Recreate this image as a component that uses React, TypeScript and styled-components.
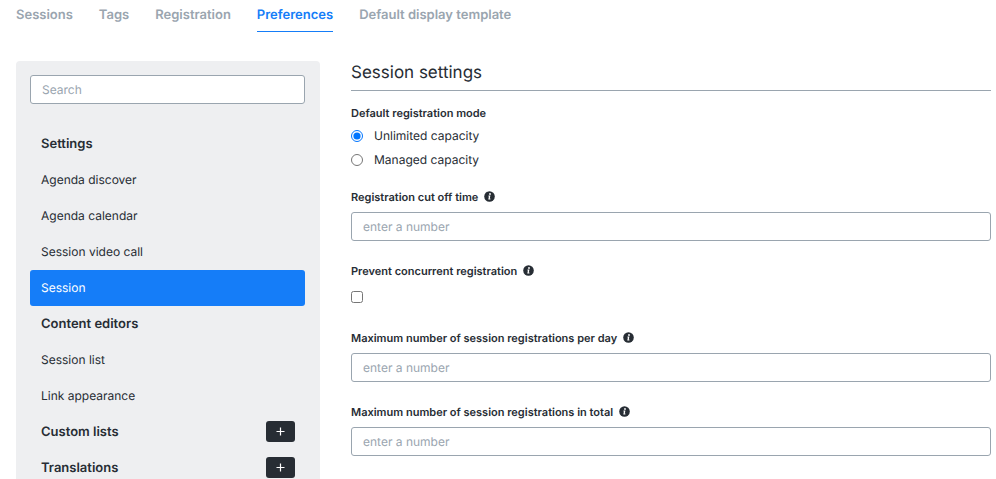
import React from "react";
import styled, { createGlobalStyle } from "styled-components";

const ink = "#272d34";
const muted = "#9aa5af";
const blue = "#157df8";

const GlobalStyle = createGlobalStyle`
  *, *::before, *::after { box-sizing: border-box; }
  body {
    margin: 0;
    background: #fff;
    color: ${ink};
    font-family: Inter, "Liberation Sans", sans-serif;
    font-size: 12px;
    line-height: 20px;
    text-rendering: geometricPrecision;
  }
  button, input { font: inherit; text-rendering: inherit; }
`;

const Page = styled.div`
  height: 100vh;
  overflow: hidden;
  padding: 0 5px 0 16px;
`;

const Tabs = styled.nav`
  display: flex;
  gap: 26px;
  padding-top: 5px;
`;

const Tab = styled.a<{ $active?: boolean }>`
  height: 27px;
  font-size: 13px;
  font-weight: 600;
  text-decoration: none;
  white-space: nowrap;
  color: ${(p) => (p.$active ? blue : muted)};
  border-bottom: 1px solid ${(p) => (p.$active ? blue : "transparent")};
`;

const Columns = styled.div`
  display: flex;
  align-items: flex-start;
  gap: 31px;
  margin-top: 29px;
`;

const Sidebar = styled.aside`
  flex: 0 0 304px;
  padding: 14px 15px 14px 14px;
  background: #eeeff1;
  border-radius: 4px;
`;

const TextInput = styled.input`
  display: block;
  width: 100%;
  height: 29px;
  padding: 0 11px;
  color: ${ink};
  background: #fff;
  border: 1px solid ${muted};
  border-radius: 3px;
  outline: none;
  &::placeholder { color: ${muted}; opacity: 1; }
  &:focus { border-color: ${blue}; }
`;

const Menu = styled.ul`
  margin: 22px 0 0;
  padding: 0;
  list-style: none;
`;

const MenuHeading = styled.li`
  display: flex;
  align-items: center;
  justify-content: space-between;
  height: 36px;
  padding: 0 10px 0 11px;
  font-size: 13px;
  font-weight: 600;
`;

const MenuLink = styled.a<{ $active?: boolean }>`
  display: flex;
  align-items: center;
  height: 36px;
  padding: 0 11px;
  border-radius: 3px;
  text-decoration: none;
  color: ${(p) => (p.$active ? "#fff" : ink)};
  background: ${(p) => (p.$active ? blue : "transparent")};
`;

const AddButton = styled.button`
  display: flex;
  align-items: center;
  justify-content: center;
  width: 29px;
  height: 21px;
  margin-bottom: 1px;
  padding: 0;
  color: #fff;
  background: ${ink};
  border: 0;
  border-radius: 3px;
  cursor: pointer;
`;

const Main = styled.main`
  flex: 1;
  min-width: 0;
`;

const Title = styled.h1`
  margin: 0 0 14px;
  padding: 1px 0 6px;
  font-size: 17px;
  line-height: 22px;
  font-weight: 400;
  border-bottom: 1px solid ${muted};
`;

const Field = styled.div`
  margin-bottom: 22px;
`;

const RadioField = styled.fieldset`
  margin: 0 0 15px;
  padding: 0;
  border: 0;
`;

const labelText = `
  display: flex;
  align-items: center;
  gap: 6px;
  height: 16px;
  padding: 0;
  font-size: 11px;
  line-height: 16px;
  font-weight: 600;
`;

const Label = styled.label`
  ${labelText}
  margin-bottom: 7px;
`;

const Legend = styled.legend`
  ${labelText}
  margin-bottom: 5px;
`;

const Option = styled.label`
  display: flex;
  align-items: center;
  gap: 11px;
  margin-bottom: 4px;
`;

const Radio = styled.input`
  width: 12px;
  height: 12px;
  margin: 0;
`;

const CheckRow = styled.div`
  display: flex;
  align-items: center;
  height: 22px;
`;

const Checkbox = styled.input`
  width: 12px;
  height: 12px;
  margin: 0;
`;

const InfoSvg = styled.svg`
  margin-bottom: 2px;
`;

const InfoIcon = () => (
  <InfoSvg width="11" height="11" viewBox="0 0 11 11" aria-hidden="true">
    <circle cx="5.5" cy="5.5" r="5.3" fill={ink} />
    <circle cx="6" cy="3" r="0.9" fill="#fff" />
    <path d="M4.5 4.6h1.9L5.8 7.6h.6v.9H4.3L4.9 5.5h-.5z" fill="#fff" />
  </InfoSvg>
);

const PlusIcon = () => (
  <svg width="9" height="9" viewBox="0 0 9 9" aria-hidden="true">
    <path d="M4.5 .5v8M.5 4.5h8" stroke="currentColor" strokeWidth="1.2" />
  </svg>
);

type Item = { label: string; kind: "heading" | "link" | "expandable"; active?: boolean };

const tabs = ["Sessions", "Tags", "Registration", "Preferences", "Default display template"];

const items: Item[] = [
  { label: "Settings", kind: "heading" },
  { label: "Agenda discover", kind: "link" },
  { label: "Agenda calendar", kind: "link" },
  { label: "Session video call", kind: "link" },
  { label: "Session", kind: "link", active: true },
  { label: "Content editors", kind: "heading" },
  { label: "Session list", kind: "link" },
  { label: "Link appearance", kind: "link" },
  { label: "Custom lists", kind: "expandable" },
  { label: "Translations", kind: "expandable" },
];

const NumberField = ({ id, label }: { id: string; label: string }) => (
  <Field>
    <Label htmlFor={id}>
      {label}
      <InfoIcon />
    </Label>
    <TextInput id={id} inputMode="numeric" placeholder="enter a number" />
  </Field>
);

export default function App() {
  return (
    <Page>
      <GlobalStyle />
      <Tabs>
        {tabs.map((t) => (
          <Tab key={t} href="#" $active={t === "Preferences"}>
            {t}
          </Tab>
        ))}
      </Tabs>
      <Columns>
        <Sidebar>
          <TextInput type="text" placeholder="Search" aria-label="Search" />
          <Menu>
            {items.map((item) =>
              item.kind === "link" ? (
                <li key={item.label}>
                  <MenuLink href="#" $active={item.active}>
                    {item.label}
                  </MenuLink>
                </li>
              ) : (
                <MenuHeading key={item.label}>
                  {item.label}
                  {item.kind === "expandable" && (
                    <AddButton type="button" aria-label={`Add to ${item.label}`}>
                      <PlusIcon />
                    </AddButton>
                  )}
                </MenuHeading>
              )
            )}
          </Menu>
        </Sidebar>
        <Main>
          <Title>Session settings</Title>
          <RadioField>
            <Legend>Default registration mode</Legend>
            <Option>
              <Radio type="radio" name="mode" defaultChecked />
              Unlimited capacity
            </Option>
            <Option>
              <Radio type="radio" name="mode" />
              Managed capacity
            </Option>
          </RadioField>
          <NumberField id="cutoff" label="Registration cut off time" />
          <Field>
            <Label htmlFor="concurrent">
              Prevent concurrent registration
              <InfoIcon />
            </Label>
            <CheckRow>
              <Checkbox id="concurrent" type="checkbox" />
            </CheckRow>
          </Field>
          <NumberField id="per-day" label="Maximum number of session registrations per day" />
          <NumberField id="total" label="Maximum number of session registrations in total" />
        </Main>
      </Columns>
    </Page>
  );
}
